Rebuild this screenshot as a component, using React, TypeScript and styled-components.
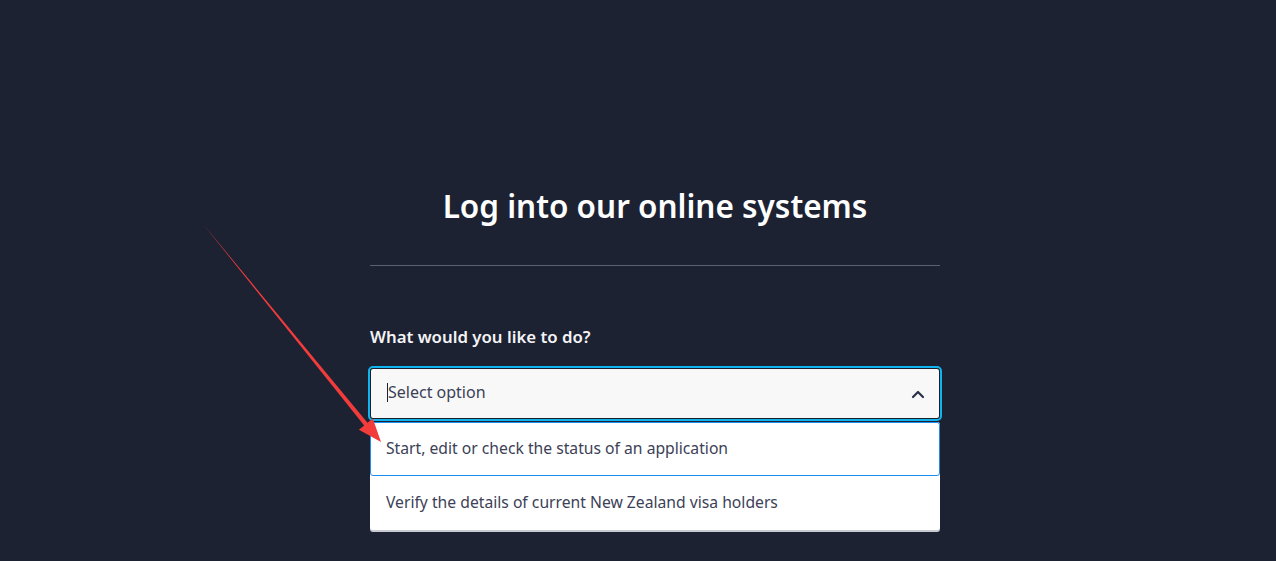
import React from "react";
import styled, { createGlobalStyle } from "styled-components";

const GlobalStyle = createGlobalStyle`
  html, body {
    margin: 0;
    padding: 0;
    background: #1d2233;
    font-family: "Noto Sans", "Open Sans", Arial, sans-serif;
  }
`;

const Page = styled.div`
  position: relative;
  min-height: 561px;
  background: #1d2233;
  display: flex;
  justify-content: center;
  padding-left: 34px;
  overflow: hidden;
`;

const Panel = styled.div`
  width: 570px;
  padding-top: 186px;
  display: flex;
  flex-direction: column;
`;

const Title = styled.h1`
  margin: 0;
  text-align: center;
  color: #ffffff;
  font-size: 31.5px;
  line-height: 40px;
  font-weight: 600;
`;

const Divider = styled.hr`
  margin: 39px 0 0;
  border: none;
  height: 1px;
  background: #5b6072;
`;

const Label = styled.label`
  margin-top: 61px;
  color: #f4f4f6;
  font-size: 16.8px;
  line-height: 20px;
  font-weight: 600;
`;

const SelectBox = styled.div`
  margin: 19px -2px 0;
  height: 51px;
  border: 2px solid #10b4ee;
  border-radius: 5px;
  display: flex;
`;

const SelectInner = styled.div`
  flex: 1;
  border: 1px solid #1b1e28;
  border-radius: 3px;
  background: #f8f8f8;
  display: flex;
  align-items: center;
  padding: 0 14px 0 16px;
`;

const Placeholder = styled.span`
  flex: 1;
  color: #3b3f55;
  font-size: 16px;
  display: flex;
  align-items: center;
  padding-bottom: 3px;
`;

const Caret = styled.span`
  display: inline-block;
  width: 1px;
  height: 19px;
  background: #1d2233;
`;

const OptionList = styled.ul`
  list-style: none;
  margin: 1px 0 0;
  padding: 0;
  background: #ffffff;
  border-radius: 3px;
  box-shadow: 0 2px 0 #c9cbd2;
`;

const Option = styled.li<{ $active?: boolean }>`
  height: 54px;
  box-sizing: border-box;
  display: flex;
  align-items: center;
  padding: 0 0 3px 15px;
  color: #3c4157;
  font-size: 15.7px;
  border: 1px solid ${(p) => (p.$active ? "#1e8ff0" : "transparent")};
  border-radius: 3px;
`;

const ArrowLayer = styled.svg`
  position: absolute;
  left: 0;
  top: 0;
  pointer-events: none;
`;

export default function App() {
  return (
    <>
      <GlobalStyle />
      <Page>
        <Panel>
          <Title>Log into our online systems</Title>
          <Divider />
          <Label>What would you like to do?</Label>
          <SelectBox>
            <SelectInner>
              <Placeholder>
                <Caret />
                Select option
              </Placeholder>
              <svg width="14" height="10" viewBox="0 0 14 10">
                <path
                  d="M2 8 L7 3 L12 8"
                  fill="none"
                  stroke="#2b3046"
                  strokeWidth="2.2"
                  strokeLinecap="round"
                  strokeLinejoin="round"
                />
              </svg>
            </SelectInner>
          </SelectBox>
          <OptionList>
            <Option $active>Start, edit or check the status of an application</Option>
            <Option>Verify the details of current New Zealand visa holders</Option>
          </OptionList>
        </Panel>
        <ArrowLayer width="1276" height="561" viewBox="0 0 1276 561">
          <polygon
            points="203,224 367.5,422.8 372.8,418.5 381,442 358.9,429.8 364.2,425.4"
            fill="#f23b3b"
          />
        </ArrowLayer>
      </Page>
    </>
  );
}
